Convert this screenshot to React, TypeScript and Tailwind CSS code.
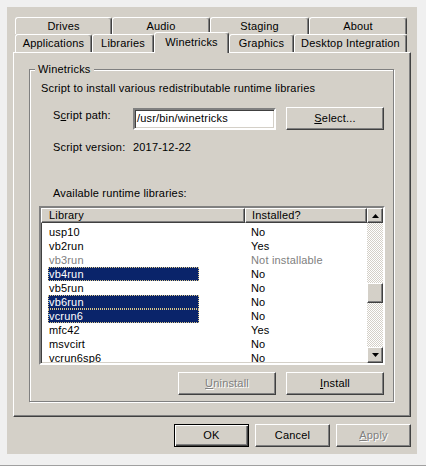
import React from "react";

const rows: { lib: string; inst: string; dis?: boolean; sel?: boolean }[] = [
  { lib: "usp10", inst: "No" },
  { lib: "vb2run", inst: "Yes" },
  { lib: "vb3run", inst: "Not installable", dis: true },
  { lib: "vb4run", inst: "No", sel: true },
  { lib: "vb5run", inst: "No" },
  { lib: "vb6run", inst: "No", sel: true },
  { lib: "vcrun6", inst: "No", sel: true },
  { lib: "mfc42", inst: "Yes" },
  { lib: "msvcirt", inst: "No" },
  { lib: "vcrun6sp6", inst: "No" },
];

const topTabs = [
  { label: "Drives", w: "w-[97px]" },
  { label: "Audio", w: "w-[98px]" },
  { label: "Staging", w: "w-[99px]" },
  { label: "About", w: "w-[98px]" },
];

function Tab({ label, w }: { label: string; w: string }) {
  return (
    <div
      className={`${w} h-full shrink-0 flex items-center justify-center border-t border-l border-r border-t-white border-l-white border-r-[#404040] rounded-t-[3px] shadow-[inset_-1px_0_0_#808080]`}
    >
      {label}
    </div>
  );
}

const raised =
  "border border-t-white border-l-white border-r-[#404040] border-b-[#404040] shadow-[inset_-1px_-1px_0_#808080] bg-[#d4d0c8]";

function Arrow({ down }: { down?: boolean }) {
  return (
    <svg width="7" height="4" viewBox="0 0 7 4" className="block">
      {down ? (
        <polygon points="0,0 7,0 3.5,4" fill="#000" />
      ) : (
        <polygon points="3.5,0 7,4 0,4" fill="#000" />
      )}
    </svg>
  );
}

export default function App() {
  return (
    <div className="w-[426px] h-[466px] bg-[#f0f0f0] border-b border-[#a0a0a0] pl-[7px] pt-[7px] font-['Liberation_Sans',Arial,sans-serif] text-[11px] leading-[13px] tracking-[0.18px] text-black">
      <div className="w-[410px] h-[447px] bg-[#d4d0c8] flex flex-col pt-[10px]">
        {/* top tab row */}
        <div className="flex ml-[8px] h-[17px]">
          {topTabs.map((t) => (
            <Tab key={t.label} label={t.label} w={t.w} />
          ))}
        </div>
        {/* bottom tab row */}
        <div className="flex ml-[8px] h-[18px]">
          <Tab label="Applications" w="w-[77px]" />
          <Tab label="Libraries" w="w-[62px]" />
          <div className="relative z-10 w-[75px] h-[21px] -mt-[2px] shrink-0 flex items-start justify-center pt-[3px] bg-[#d4d0c8] border-t border-l border-r border-t-white border-l-white border-r-[#404040] rounded-t-[3px] shadow-[inset_-1px_0_0_#808080]">
            Winetricks
          </div>
          <Tab label="Graphics" w="w-[65px]" />
          <Tab label="Desktop Integration" w="w-[113px]" />
        </div>
        {/* panel */}
        <div className="ml-[6px] w-[398px] h-[365px] shrink-0 border border-t-white border-l-white border-r-[#404040] border-b-[#404040] shadow-[inset_-1px_-1px_0_#808080] pl-[15px] pt-[16px]">
          <div className="w-[365px] h-[333px] border border-[#808080] shadow-[inset_1px_1px_0_#fff,1px_1px_0_#fff] flex flex-col">
            <span className="self-start -mt-[7px] ml-[5px] px-[3px] bg-[#d4d0c8] h-[13px]">
              Winetricks
            </span>
            <div className="mt-[6px] ml-[11px] h-[13px]">
              Script to install various redistributable runtime libraries
            </div>
            <div className="mt-[12px] flex items-start h-[23px]">
              <span className="ml-[23px] w-[80px] mt-[2px]">
                S<u>c</u>ript path:
              </span>
              <div className="mt-[1px] w-[143px] h-[22px] bg-white border-2 border-t-[#808080] border-l-[#808080] border-b-white border-r-white shadow-[inset_1px_1px_0_#404040,inset_-1px_-1px_0_#d4d0c8] pl-[2px] pt-[2px]">
                /usr/bin/winetricks
              </div>
              <button
                className={`ml-[10px] w-[98px] h-[23px] ${raised} flex items-center justify-center`}
              >
                <span>
                  <u>S</u>elect...
                </span>
              </button>
            </div>
            <div className="mt-[11px] flex h-[13px]">
              <span className="ml-[23px] w-[80px]">Script version:</span>
              <span>2017-12-22</span>
            </div>
            <div className="mt-[33px] ml-[23px] h-[13px]">
              Available runtime libraries:
            </div>
            {/* list */}
            <div className="mt-[6px] ml-[9px] w-[346px] h-[159px] shrink-0 bg-white border-2 border-t-[#808080] border-l-[#808080] border-b-white border-r-white shadow-[inset_1px_1px_0_#404040,inset_-1px_-1px_0_#d4d0c8] flex">
              <div className="w-[326px] h-full flex flex-col overflow-hidden">
                <div className="flex h-[15px] shrink-0">
                  <div className={`w-[204px] h-[15px] ${raised} pl-[7px] leading-[13px]`}>
                    Library
                  </div>
                  <div className={`w-[122px] h-[15px] ${raised} pl-[6px] leading-[13px]`}>
                    Installed?
                  </div>
                </div>
                <div className="mt-[2px] flex flex-col">
                  {rows.map((r) => (
                    <div
                      key={r.lib}
                      className={`flex h-[14px] shrink-0 ${r.dis ? "text-[#808080]" : "text-black"}`}
                    >
                      <div className="w-[204px] shrink-0">
                        <div
                          className={`ml-[7px] w-[151px] h-[14px] border leading-[12px] ${
                            r.sel
                              ? "bg-[#0a246a] text-white border-dotted border-[#d8c68a]"
                              : "border-transparent"
                          }`}
                        >
                          {r.lib}
                        </div>
                      </div>
                      <div className="pl-[6px] leading-[14px]">{r.inst}</div>
                    </div>
                  ))}
                </div>
              </div>
              {/* scrollbar */}
              <div className="w-[16px] h-full flex flex-col [background-image:repeating-conic-gradient(#d4d0c8_0_25%,#ffffff_0_50%)] [background-size:2px_2px]">
                <div className={`h-[15px] shrink-0 ${raised} flex items-center justify-center`}>
                  <Arrow />
                </div>
                <div className={`mt-[60px] h-[20px] shrink-0 ${raised}`} />
                <div className="flex-1" />
                <div className={`h-[16px] shrink-0 ${raised} flex items-center justify-center`}>
                  <Arrow down />
                </div>
              </div>
            </div>
            {/* buttons */}
            <div className="mt-[7px] flex justify-end gap-[10px] pr-[9px]">
              <button
                className={`w-[98px] h-[23px] ${raised} flex items-center justify-center text-[#808080] [text-shadow:1px_1px_0_#fff]`}
              >
                <span>
                  <u>U</u>ninstall
                </span>
              </button>
              <button className={`w-[98px] h-[23px] ${raised} flex items-center justify-center`}>
                <span>
                  <u>I</u>nstall
                </span>
              </button>
            </div>
          </div>
        </div>
        {/* dialog buttons */}
        <div className="mt-[7px] flex justify-end gap-[6px] pr-[6px]">
          <button className="w-[75px] h-[23px] bg-[#d4d0c8] border border-black shadow-[inset_1px_1px_0_#fff,inset_-1px_-1px_0_#404040,inset_-2px_-2px_0_#808080] flex items-center justify-center">
            OK
          </button>
          <button className={`w-[75px] h-[23px] ${raised} flex items-center justify-center`}>
            Cancel
          </button>
          <button
            className={`w-[75px] h-[23px] ${raised} flex items-center justify-center text-[#808080] [text-shadow:1px_1px_0_#fff]`}
          >
            <span>
              <u>A</u>pply
            </span>
          </button>
        </div>
      </div>
    </div>
  );
}
